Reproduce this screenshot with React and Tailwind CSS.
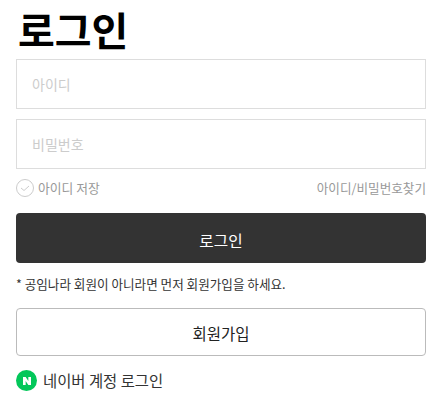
export default function App() {
  return (
    <div className="w-[441px] h-[407px] bg-white pl-4 pr-[15px] font-['Noto_Sans_CJK_KR','Noto_Sans',sans-serif] text-[#333]">
      <h1 className="h-[59px] pl-[2px] text-[40px] leading-[59px] font-bold text-black">로그인</h1>
      <input
        placeholder="아이디"
        className="block w-full h-[50px] px-[15px] border border-[#ddd] text-sm placeholder:text-[#ccc] outline-none"
      />
      <input
        placeholder="비밀번호"
        className="block w-full h-[50px] mt-[10px] px-[15px] border border-[#ddd] text-sm placeholder:text-[#ccc] outline-none"
      />
      <div className="flex items-center justify-between h-[44px] pb-[6px] text-[#999]">
        <div className="flex items-center gap-[4px] text-[12.8px]">
          <svg width="18" height="18" viewBox="0 0 18 18" fill="none" stroke="#ccc">
            <circle cx="9" cy="9" r="8.5" />
            <path d="M5 9l3 2.5 5-4.5" />
          </svg>
          <span>아이디 저장</span>
        </div>
        <span className="text-[12.6px]">아이디/비밀번호찾기</span>
      </div>
      <button className="block w-full h-[50px] pt-[5px] rounded bg-[#333] text-white text-[15.7px]">로그인</button>
      <p className="h-[45px] pt-[10px] text-[12.6px] leading-[22px] text-[#333]">* 공임나라 회원이 아니라면 먼저 회원가입을 하세요.</p>
      <button className="block w-full h-[48px] pt-[3px] rounded border border-[#bbb] bg-white text-[15.5px] text-[#222]">회원가입</button>
      <div className="flex items-center gap-[6px] mt-[13px]">
        <span className="flex items-center justify-center w-[21px] h-[21px] rounded-full bg-[#03c75a]">
          <svg width="8" height="8" viewBox="0 0 9 9" fill="white">
            <path d="M0 0h3l3 4.5V0h3v9H6L3 4.5V9H0z" />
          </svg>
        </span>
        <span className="text-[15.4px] text-[#333]">네이버 계정 로그인</span>
      </div>
    </div>
  );
}
